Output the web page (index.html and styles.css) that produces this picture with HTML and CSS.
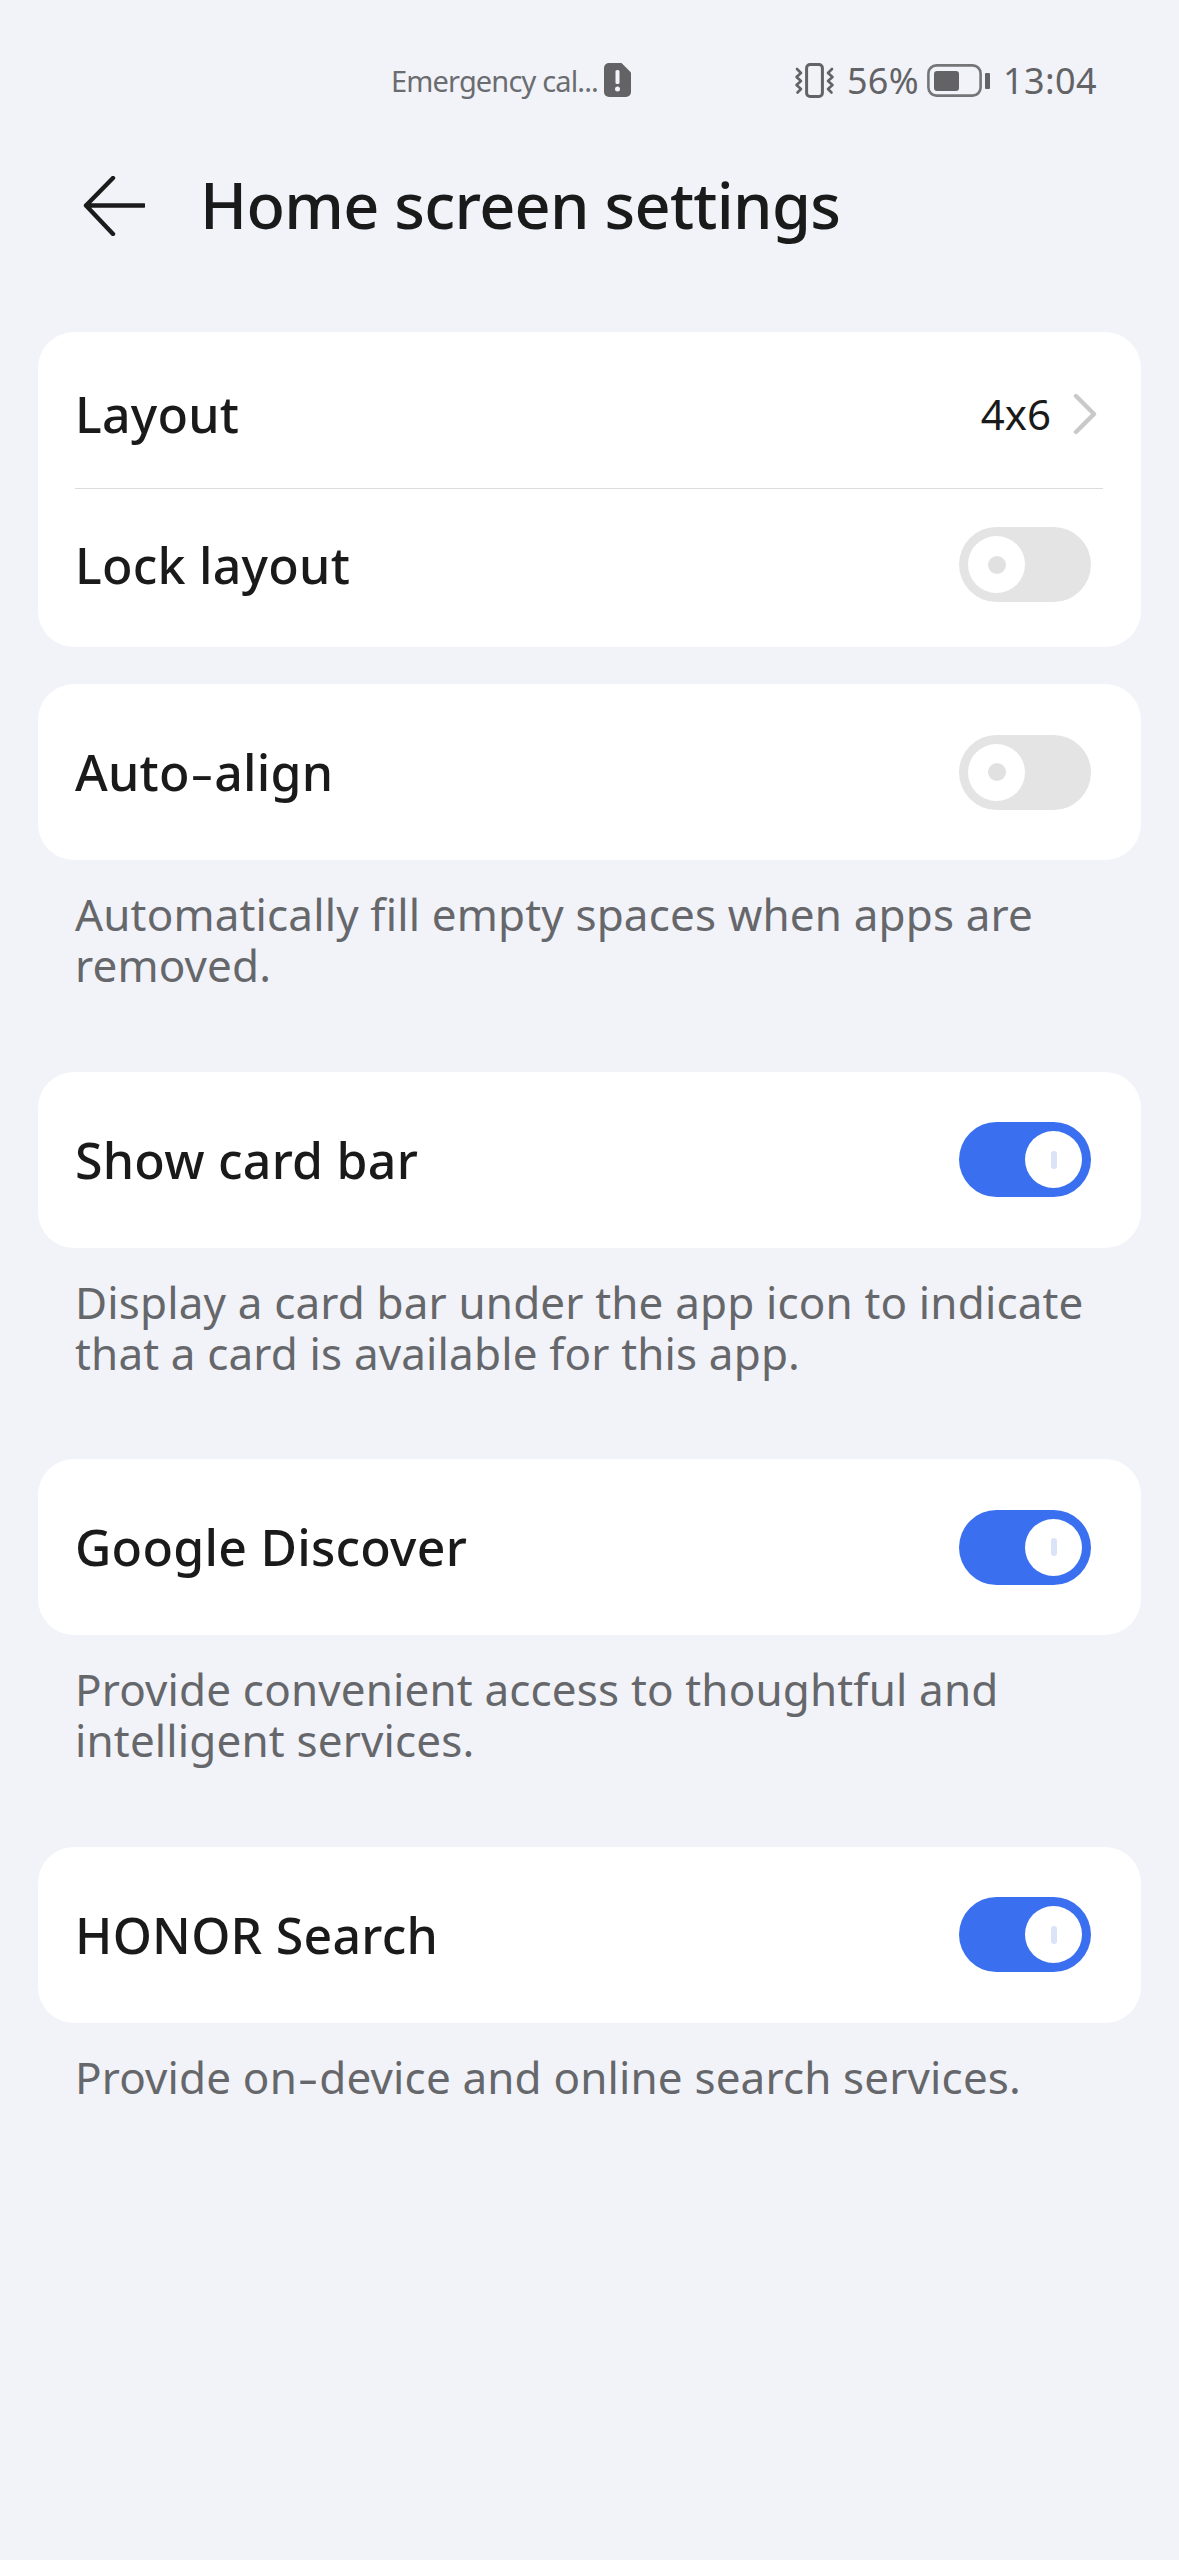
FILE: index.html
```html
<!DOCTYPE html>
<html lang="en">
<head>
<meta charset="utf-8">
<title>Home screen settings</title>
<link rel="stylesheet" href="styles.css">
</head>
<body>
<div class="status">
  <div class="status-mid">
    <span class="carrier">Emergency cal...</span>
    <svg class="sim" viewBox="0 0 27 34"><path d="M5 0h12.5L27 9.5V29a5 5 0 0 1-5 5H5a5 5 0 0 1-5-5V5a5 5 0 0 1 5-5z" fill="#636366"/><rect x="11.5" y="7" width="4" height="14" rx="1.6" fill="#f1f3f8"/><circle cx="13.5" cy="26" r="2.5" fill="#f1f3f8"/></svg>
  </div>
  <div class="status-right">
    <svg class="vib" viewBox="0 0 42 35" fill="none" stroke="#636366" stroke-linejoin="round" stroke-linecap="round"><rect x="12.6" y="1.5" width="15.8" height="32" rx="3.5" stroke-width="3"/><path d="M3 6l4 4-4.5 4 4.5 4-4.5 4 4.5 4-3.5 3.5M38 6l-4 4 4.5 4-4.5 4 4.5 4-4.5 4 3.5 3.5" stroke-width="2.6"/></svg>
    <span class="pct">56%</span>
    <svg class="batt" viewBox="0 0 63 33"><rect x="1.4" y="1.4" width="52.2" height="30.2" rx="8" fill="none" stroke="#757578" stroke-width="2.6"/><rect x="7" y="7" width="25" height="20" rx="3" fill="#636366"/><rect x="58" y="9" width="5" height="16" rx="1" fill="#636366"/></svg>
    <span class="time">13:04</span>
  </div>
</div>

<header class="bar">
  <svg class="back" viewBox="0 0 62 60" fill="none" stroke="#1b1b1c" stroke-width="4.4" stroke-linecap="round" stroke-linejoin="round"><path d="M30 2L3 29.5 30 58M3 29.5h58"/></svg>
  <h1 class="title">Home screen settings</h1>
</header>

<main class="content">
  <section class="card card-double">
    <div class="row row-first">
      <span class="label">Layout</span>
      <span class="value">4x6</span>
      <svg class="chev" viewBox="0 0 24 42" fill="none" stroke="#c9c9cb" stroke-width="4.4" stroke-linecap="round" stroke-linejoin="round"><path d="M3 3l18 18L3 39"/></svg>
    </div>
    <div class="rule"></div>
    <div class="row row-second">
      <span class="label">Lock layout</span>
      <span class="toggle off"><span class="knob"></span></span>
    </div>
  </section>

  <section class="group">
    <div class="card row single">
      <span class="label">Auto<span class="hy">-</span>align</span>
      <span class="toggle off"><span class="knob"></span></span>
    </div>
    <p class="desc">Automatically fill empty spaces when apps are removed.</p>
  </section>

  <section class="group">
    <div class="card row single">
      <span class="label">Show card bar</span>
      <span class="toggle on"><span class="knob"></span></span>
    </div>
    <p class="desc">Display a card bar under the app icon to indicate that a card is available for this app.</p>
  </section>

  <section class="group">
    <div class="card row single">
      <span class="label">Google Discover</span>
      <span class="toggle on"><span class="knob"></span></span>
    </div>
    <p class="desc">Provide convenient access to thoughtful and intelligent services.</p>
  </section>

  <section class="group">
    <div class="card row single">
      <span class="label">HONOR Search</span>
      <span class="toggle on"><span class="knob"></span></span>
    </div>
    <p class="desc">Provide on<span class="hy">-</span>device and online search services.</p>
  </section>
</main>
</body>
</html>
```
FILE: styles.css
```css
* { box-sizing: border-box; }
html, body { margin: 0; padding: 0; }
body {
  width: 1179px;
  height: 2560px;
  overflow: hidden;
  background: #f1f3f8;
  font-family: "Noto Sans", "Liberation Sans", sans-serif;
  color: #1a1a1b;
}
.status {
  height: 100px;
  padding: 60px 82px 0 391px;
  display: flex;
  align-items: center;
  justify-content: space-between;
  color: #636366;
}
.status-mid, .status-right { display: flex; align-items: center; }
.carrier { font-size: 29px; letter-spacing: -0.85px; color: #6b6c70; }
.sim { width: 27px; height: 34px; margin-left: 6px; }
.status-right { gap: 10px; }
.vib { width: 42px; height: 35px; margin-right: 1px; }
.pct { font-size: 36px; letter-spacing: 0.3px; margin-right: -2px; }
.time { font-size: 36px; letter-spacing: 0.4px; margin-left: 3px; }
.batt { width: 63px; height: 33px; }
.bar {
  height: 211px;
  padding: 0 0 0 83px;
  display: flex;
  align-items: center;
}
.back { width: 62px; height: 60px; flex: none; }
.title { margin: 0 0 3px 55px; font-size: 63px; letter-spacing: -0.7px; font-weight: 500; line-height: 1; }
.content { padding: 21px 38px 0; display: flex; flex-direction: column; gap: 37px; }
.card { background: #fff; border-radius: 36px; }
.card-double { height: 315px; display: flex; flex-direction: column; }
.row { display: flex; align-items: center; padding: 0 50px 0 37px; }
.row-first { height: 156px; padding-top: 8px; padding-right: 44px; }
.row-second { flex: 1; padding-bottom: 7px; }
.single { height: 176px; }
.rule { height: 1px; margin: 0 38px 0 37px; background: #dcdcde; }
.label { font-size: 50px; font-weight: 500; flex: 1; letter-spacing: 0.25px; }
.value { font-size: 42px; margin-bottom: 2px; }
.chev { width: 24px; height: 42px; margin-left: 22px; }
.toggle { width: 132px; height: 75px; border-radius: 38px; display: flex; align-items: center; padding: 0 9px; flex: none; }
.toggle.off { background: #e4e4e5; }
.toggle.on { background: #3a6ff0; justify-content: flex-end; }
.knob { width: 57px; height: 57px; border-radius: 50%; background: #fff; display: flex; align-items: center; justify-content: center; }
.off .knob::after { content: ""; width: 18px; height: 18px; border-radius: 50%; background: #e1e1e2; }
.on .knob::after { content: ""; width: 6px; height: 18px; border-radius: 3px; background: #dbe3f8; }
.group { display: flex; flex-direction: column; }
.desc { margin: 29px 37px 0; font-size: 44px; line-height: 51px; color: #66676b; height: 145.5px; letter-spacing: 0.15px; }
.group:last-child .desc { height: auto; }
.hy { display: inline-block; transform: scaleX(1.45); margin: 0 4px; font-weight: 400; }
```
